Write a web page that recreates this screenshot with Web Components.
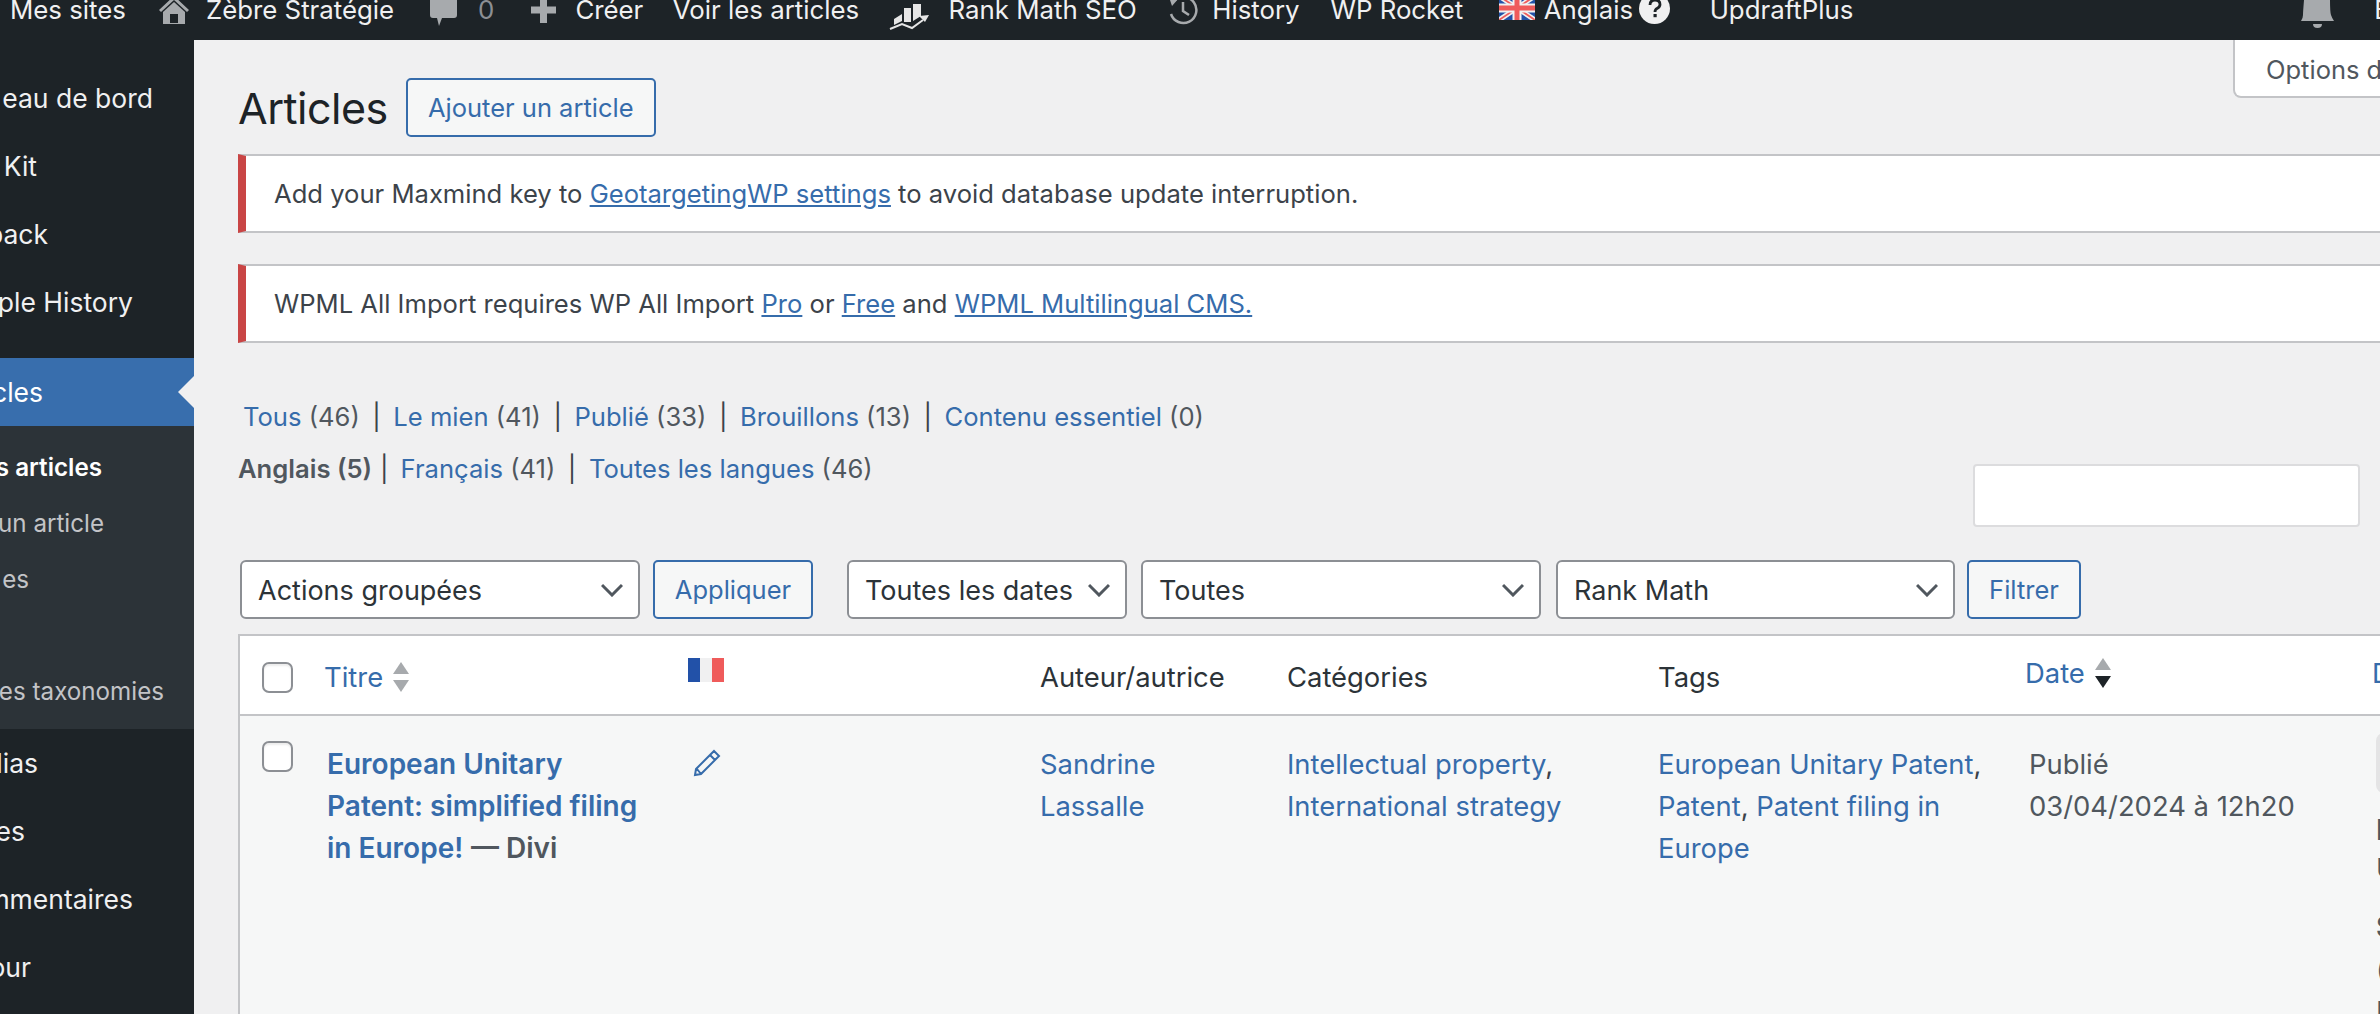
<!DOCTYPE html>
<html lang="fr">
<head>
<meta charset="utf-8">
<title>Articles</title>
<style>
    html, body { margin: 0; height: 1014px; overflow: hidden; background: #f0f0f1; }
    body { font-family: Inter, "Liberation Sans", sans-serif; color: #3c434a; font-size: 26px; }
    a { color: #366cab; }
</style>
</head>
<body>

<wp-shell>
    <wp-adminbar slot="bar"></wp-adminbar>
    <wp-sidebar slot="side"></wp-sidebar>
    <wp-heading>Articles</wp-heading>
    <wp-notice top="17">Add your Maxmind key to <a href="#">GeotargetingWP settings</a> to avoid database update interruption.</wp-notice>
    <wp-notice top="31">WPML All Import requires WP All Import <a href="#">Pro</a> or <a href="#">Free</a> and <a href="#">WPML Multilingual CMS.</a></wp-notice>
    <wp-views></wp-views>
    <wp-filters></wp-filters>
    <wp-posts></wp-posts>
</wp-shell>

<script>
const LINK = "#366cab";

class WpShell extends HTMLElement
{
    constructor()
    {
        super();
        this.attachShadow({mode: "open"}).innerHTML = `
        <style>
            :host{ display: block; width: 2380px; height: 1014px; overflow: hidden; position: relative; }
            .cols{ display: flex; height: 974px; }
            main{ flex: 1; min-width: 0; padding-left: 44px; box-sizing: border-box; overflow: hidden; }
            .tab{
                position: absolute; left: 2233px; top: 40px; width: 200px; height: 58px;
                box-sizing: border-box; padding: 14px 0 0 31px;
                background: #fff; border: 2px solid #c3c4c7; border-top: 0; border-radius: 0 0 0 8px;
                color: #50575e; font-size: 25.5px; white-space: nowrap;
            }
        </style>
        <slot name="bar"></slot>
        <div class="cols">
            <slot name="side"></slot>
            <main><slot></slot></main>
        </div>
        <div class="tab">Options d</div>`;
    }
}

class WpAdminbar extends HTMLElement
{
    constructor()
    {
        super();
        const ic = "#a7aaad";
        this.attachShadow({mode: "open"}).innerHTML = `
        <style>
            :host{
                display: flex; align-items: flex-end; height: 40px; padding-bottom: 15px; box-sizing: border-box;
                background: #1d2327; color: #f0f0f1; font-size: 25.8px; white-space: nowrap; overflow: hidden;
            }
            span, svg{ flex: none; display: block; }
            span{ line-height: 30px; }
            .dim{ color: #8c8f94; }
        </style>
        <span style="margin-left:10px">Mes sites</span>
        <svg style="margin-left:33px;margin-bottom:1px" width="30" height="32" viewBox="0 0 30 32"><path d="M15 4 0 18l2 2L15 8l13 12 2-2z" fill="${ic}"/><path d="M4 20 15 10l11 10v12H4z" fill="${ic}"/><rect x="11" y="22" width="8" height="9" fill="#1d2327"/></svg>
        <span style="margin-left:17px">Zèbre Stratégie</span>
        <svg style="margin-left:36px;margin-bottom:-1px" width="27" height="30" viewBox="0 0 27 30"><path d="M0 0h27v19q0 3-3 3H12l-3 8-2-8H3q-3 0-3-3z" fill="${ic}"/></svg>
        <span class="dim" style="margin-left:21px">0</span>
        <svg style="margin-left:37px;margin-bottom:2px" width="25" height="26" viewBox="0 0 25 26"><path d="M9 0h7v9.500h9v7h-9V26H9v-9.500H0v-7h9z" fill="${ic}"/></svg>
        <span style="margin-left:19px">Créer</span>
        <span style="margin-left:29.500px">Voir les articles</span>
        <svg style="margin-left:29.500px;margin-bottom:-5px" width="40" height="26" viewBox="0 0 40 26"><path d="M5 15l8-5v7l-8 4zM15 4h7v14h-7zM24 0h8v12l-8 5z" fill="#e6e6e6"/><path d="M1 25l12-5 10 4 11-8" fill="none" stroke="#e6e6e6" stroke-width="2"/><path d="M40 11l-10 1 6 6z" fill="#e6e6e6"/></svg>
        <span style="margin-left:20px">Rank Math SEO</span>
        <svg style="margin-left:31.500px;margin-bottom:0" width="30" height="30" viewBox="0 0 30 30"><path d="M6 6a13 13 0 1 1-3 13" fill="none" stroke="${ic}" stroke-width="2.500"/><path d="M1 2l10 1-7 8z" fill="${ic}"/><path d="M15 7v9l6 4" fill="none" stroke="${ic}" stroke-width="2.500"/></svg>
        <span style="margin-left:14px">History</span>
        <span style="margin-left:31px">WP Rocket</span>
        <svg style="margin-left:36px;margin-bottom:5px" width="36" height="24" viewBox="0 0 36 24"><rect width="36" height="24" fill="#2251a8"/><path d="M0 0l36 24M36 0L0 24" stroke="#f1f1f1" stroke-width="5"/><path d="M0 0l36 24M36 0L0 24" stroke="#ef5b5b" stroke-width="1.800"/><path d="M18 0v24M0 12h36" stroke="#f1f1f1" stroke-width="9"/><path d="M18 0v24M0 12h36" stroke="#ef5b5b" stroke-width="5"/></svg>
        <span style="margin-left:8.500px">Anglais</span>
        <svg style="margin-left:6px;margin-bottom:1px" width="31" height="31" viewBox="0 0 31 31"><circle cx="15.500" cy="15.500" r="15.500" fill="#f0f0f1"/><path d="M11 12q0-5 5-5t5 4.500q0 2.500-3 4-2 1-2 3.500" fill="none" stroke="#1d2327" stroke-width="2.800"/><rect x="14.500" y="21" width="3.200" height="3.200" fill="#1d2327"/></svg>
        <span style="margin-left:39.500px">UpdraftPlus</span>
        <svg style="margin-left:448px;margin-bottom:-3px" width="33" height="28" viewBox="0 0 33 28"><path d="M3 0h26q0 12 1 15t3 6H0q2-3 2-6t1-15z" fill="${ic}"/><path d="M12 24h9q0 4-4.500 4T12 24z" fill="${ic}"/></svg>
        <span style="margin-left:40px">B</span>`;
    }
}

class WpMenuItem extends HTMLElement
{
    constructor()
    {
        super();
        this.attachShadow({mode: "open"}).innerHTML = `
        <style>
            :host{
                display: flex; align-items: center; justify-content: flex-end; height: 68px;
                white-space: nowrap; color: #f0f0f1; font-size: 26.5px; position: relative;
            }
            :host([sub]){ height: 56px; color: #c3c4c7; font-size: 24.2px; }
            :host([sub][on]){ color: #fff; font-weight: 600; }
            :host([active]){ background: #386ead; color: #fff; }
            :host([active])::after{
                content: ""; position: absolute; right: 0; top: 18px;
                border: 16px solid transparent; border-left: 0; border-right: 16px solid #f0f0f1;
            }
        </style>
        <slot></slot>`;
    }
}

class WpSidebar extends HTMLElement
{
    constructor()
    {
        super();
        const item = (t, end, attrs = "") =>
            `<wp-menu-item ${attrs} style="padding-right:${194 - end}px">${t}</wp-menu-item>`;
        this.attachShadow({mode: "open"}).innerHTML = `
        <style>
            :host{ display: block; flex: none; width: 194px; background: #1d2327; overflow: hidden; }
            .head{ padding-top: 24px; margin-bottom: 22px; }
            .subs{ background: #2c3338; padding: 13px 0 10px; }
        </style>
        <div class="head">
            ${item("eau de bord", 153)}
            ${item("Kit", 37)}
            ${item("back", 48)}
            ${item("ple History", 133)}
        </div>
        ${item("cles", 43, "active")}
        <div class="subs">
            ${item("s articles", 102, "sub on")}
            ${item("un article", 104, "sub")}
            ${item("es", 29, "sub")}
            ${item("", 29, "sub")}
            ${item("es taxonomies", 164, "sub")}
        </div>
        ${item("dias", 38)}
        ${item("es", 25)}
        ${item("mmentaires", 133)}
        ${item("our", 31)}`;
    }
}

class WpButton extends HTMLElement
{
    constructor()
    {
        super();
        this.attachShadow({mode: "open"}).innerHTML = `
        <style>
            :host{
                display: flex; align-items: center; justify-content: center; flex: none; box-sizing: border-box;
                height: 59px; border: 2px solid ${LINK}; border-radius: 5px; background: #f6f7f7;
                color: ${LINK}; font-size: 25.5px; white-space: nowrap;
            }
        </style>
        <slot></slot>`;
    }
}

class WpSelect extends HTMLElement
{
    constructor()
    {
        super();
        this.attachShadow({mode: "open"}).innerHTML = `
        <style>
            :host{
                display: flex; align-items: center; justify-content: space-between; flex: none; box-sizing: border-box;
                height: 59px; padding: 1px 15px 0 16px; border: 2px solid #8c8f94; border-radius: 6px; background: #fff;
                color: #2c3338; font-size: 27px; white-space: nowrap;
            }
            svg{ display: block; flex: none; }
        </style>
        <slot></slot>
        <svg width="22" height="14" viewBox="0 0 22 14"><path d="M1 2l10 10L21 2" fill="none" stroke="#50575e" stroke-width="3"/></svg>`;
    }
}

class WpHeading extends HTMLElement
{
    constructor()
    {
        super();
        this.attachShadow({mode: "open"}).innerHTML = `
        <style>
            :host{ display: flex; align-items: center; height: 59px; margin-top: 38px; }
            h1{ margin: 0; font-size: 43px; font-weight: 400; color: #1d2327; letter-spacing: -.5px; }
            wp-button{ width: 250px; margin-left: 18px; }
        </style>
        <h1><slot></slot></h1>
        <wp-button>Ajouter un article</wp-button>`;
    }
}

class WpNotice extends HTMLElement
{
    constructor()
    {
        super();
        const top = this.getAttribute("top");
        this.attachShadow({mode: "open"}).innerHTML = `
        <style>
            :host{
                display: flex; align-items: center; box-sizing: border-box; height: 79px; margin-top: ${top}px;
                padding-left: 28px; background: #fff; border: solid #c3c4c7; border-width: 2px 0 2px;
                border-left: 8px solid #c94545; font-size: 25.6px; color: #3c434a; white-space: nowrap;
            }
            ::slotted(a){ color: ${LINK}; }
        </style>
        <div><slot></slot></div>`;
    }
}

class WpViews extends HTMLElement
{
    constructor()
    {
        super();
        const row = (items) => items.map(([t, n]) => `<a href="#">${t}</a> (${n})`).join(`<i>|</i>`);
        this.attachShadow({mode: "open"}).innerHTML = `
        <style>
            :host{ display: block; font-size: 25.6px; color: #50575e; white-space: nowrap; height: 217px; box-sizing: border-box; position: relative; }
            a{ color: ${LINK}; text-decoration: none; }
            i{ font-style: normal; margin: 0 12.500px; color: #3c434a; }
            .r1{ padding: 57px 0 0 5px; line-height: 34px; }
            .r2{ padding-top: 18px; line-height: 34px; }
            b{ font-weight: 600; }
            .s{ position: absolute; left: 1735px; top: 121px; width: 387px; height: 63px; box-sizing: border-box; background: #fff; border: 2px solid #dcdcde; border-radius: 4px; }
            .r2 i.t{ margin: 0 12px 0 8px; }
        </style>
        <div class="r1">${row([["Tous",46],["Le mien",41],["Publié",33],["Brouillons",13],["Contenu essentiel",0]])}</div>
        <div class="r2"><b>Anglais (5)</b><i class="t">|</i>${row([["Français",41],["Toutes les langues",46]])}</div>
        <div class="s"></div>`;
    }
}

class WpFilters extends HTMLElement
{
    constructor()
    {
        super();
        this.attachShadow({mode: "open"}).innerHTML = `
        <style>
            :host{ display: flex; height: 59px; padding-left: 2px; }
        </style>
        <wp-select style="width:400px">Actions groupées</wp-select>
        <wp-button style="width:160px;margin-left:13px">Appliquer</wp-button>
        <wp-select style="width:280px;margin-left:34px">Toutes les dates</wp-select>
        <wp-select style="width:400px;margin-left:14px">Toutes</wp-select>
        <wp-select style="width:399px;margin-left:15px">Rank Math</wp-select>
        <wp-button style="width:114px;margin-left:12px">Filtrer</wp-button>`;
    }
}

class WpSort extends HTMLElement
{
    constructor()
    {
        super();
        const down = this.getAttribute("down") !== null ? "#1d2327" : "#a7aaad";
        this.attachShadow({mode: "open"}).innerHTML = `
        <style>:host{ display: inline-block; vertical-align: middle; } svg{ display: block; }</style>
        <svg width="16" height="30" viewBox="0 0 16 30"><path d="M8 0l8 12H0z" fill="#a7aaad"/><path d="M0 18h16l-8 12z" fill="${down}"/></svg>`;
    }
}

class WpCheck extends HTMLElement
{
    constructor()
    {
        super();
        this.attachShadow({mode: "open"}).innerHTML = `
        <style>
            :host{ display: block; width: 31px; height: 31px; box-sizing: border-box; background: #fff; border: 2px solid #8c8f94; border-radius: 7px; box-shadow: inset 0 2px 2px rgba(0,0,0,.08); }
        </style>`;
    }
}

class WpPosts extends HTMLElement
{
    constructor()
    {
        super();
        this.attachShadow({mode: "open"}).innerHTML = `
        <style>
            :host{ display: block; margin-top: 15px; height: 400px; box-sizing: border-box; border: solid #c3c4c7; border-width: 2px 0 0 2px; background: #f6f7f7; font-size: 27.4px; line-height: 42px; }
            a{ color: ${LINK}; text-decoration: none; }
            .row{ display: grid; grid-template-columns: 22px 62px 363px 353px 247px 371px 367px 347px 1fr; }
            .row > *{ min-width: 0; }
            .head{ height: 78px; background: #fff; border-bottom: 2px solid #c3c4c7; color: #2c3338; }
            .head wp-check{ margin-top: 26px; }
            .head > div{ padding-top: 20px; white-space: nowrap; }
            .head wp-sort{ margin-left: 10px; margin-top: -6px; }
            .flag{ display: flex; width: 36px; height: 24px; margin: 3px 0 0 1px; }
            .flag i{ flex: 1; }
            .body{ height: 400px; }
            .body wp-check{ margin-top: 25px; }
            .body > div{ padding-top: 27px; }
            b{ font-weight: 600; font-size: 28px; }
            .body svg{ display: block; margin-top: 6px; margin-left: 6px; }
            .post{ padding-left: 3px; width: 330px; }
            .post span{ color: #50575e; font-weight: 600; font-size: 28px; }
            .tags{ width: 330px; }
            .date{ color: #50575e; white-space: nowrap; padding-left: 4px; }
            .edge{ color: #50575e; white-space: nowrap; padding-left: 4px; }
            .body > .edge{ padding-top: 17px; }
            .chip{ width: 40px; height: 60px; background: #e4e4e5; border-radius: 8px; }
            .edge p{ margin: 0; }
        </style>
        <div class="row head">
            <span></span>
            <wp-check></wp-check>
            <div><a href="#">Titre</a><wp-sort></wp-sort></div>
            <div style="padding-top:19px"><div class="flag"><i style="background:#2251a8"></i><i style="background:#f0f0f1"></i><i style="background:#ef5b5b"></i></div></div>
            <div>Auteur/autrice</div>
            <div>Catégories</div>
            <div>Tags</div>
            <div style="margin-top:-4px"><a href="#">Date</a><wp-sort down></wp-sort></div>
            <div style="margin-top:-4px"><a href="#">D</a></div>
        </div>
        <div class="row body">
            <span></span>
            <wp-check></wp-check>
            <div class="post"><a href="#"><b>European Unitary Patent: simplified filing in Europe!</b></a> <span>— Divi</span></div>
            <div><svg width="28" height="28" viewBox="0 0 28 28"><path d="M21 2l5 5L8 25l-6 1 1-6z M17 6l5 5 M4 20l4 5" fill="none" stroke="${LINK}" stroke-width="2"/></svg></div>
            <div style="width:140px"><a href="#">Sandrine Lassalle</a></div>
            <div style="width:330px"><a href="#">Intellectual property</a>, <a href="#">International strategy</a></div>
            <div class="tags"><a href="#">European Unitary Patent</a>, <a href="#">Patent</a>, <a href="#">Patent filing in Europe</a></div>
            <div class="date">Publié<br>03/04/2024 à 12h20</div>
            <div class="edge">
                <div class="chip"></div>
                <p style="margin-top:18px;line-height:38px"><b>P</b></p>
                <p style="line-height:38px">U</p>
                <p style="margin-top:19px"><b>S</b></p>
                <p>(</p>
                <p>I</p>
            </div>
        </div>`;
    }
}

customElements.define("wp-shell", WpShell);
customElements.define("wp-adminbar", WpAdminbar);
customElements.define("wp-menu-item", WpMenuItem);
customElements.define("wp-sidebar", WpSidebar);
customElements.define("wp-button", WpButton);
customElements.define("wp-select", WpSelect);
customElements.define("wp-heading", WpHeading);
customElements.define("wp-notice", WpNotice);
customElements.define("wp-views", WpViews);
customElements.define("wp-filters", WpFilters);
customElements.define("wp-sort", WpSort);
customElements.define("wp-check", WpCheck);
customElements.define("wp-posts", WpPosts);
</script>
</body>
</html>
